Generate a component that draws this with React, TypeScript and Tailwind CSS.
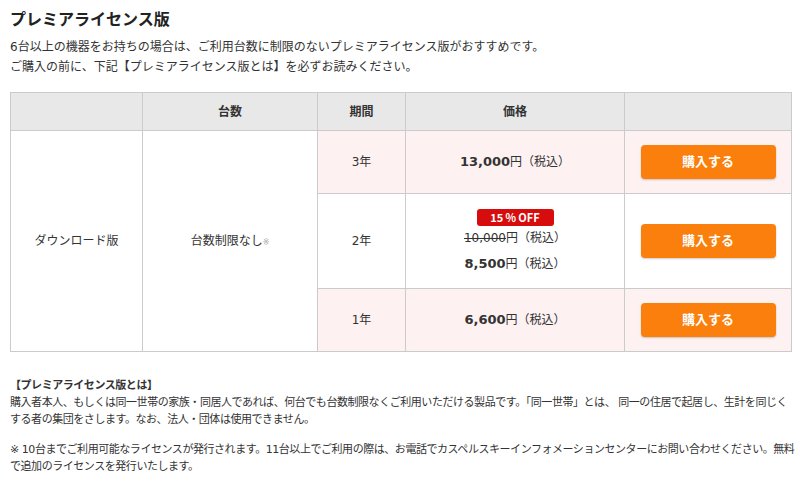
const font = "font-['DejaVu_Sans','Noto_Sans_CJK_JP',sans-serif]"

function Price({ value }: { value: string }) {
  return (
    <span className="text-[12px]">
      <span className="text-[13px] font-bold">{value}</span>円（税込）
    </span>
  )
}

function BuyButton() {
  return (
    <button className="w-[135px] h-[34px] rounded-[4px] bg-[#fa7f0c] text-white text-[13px] font-bold shadow-[0_1px_2px_rgba(0,0,0,0.2)]">
      購入する
    </button>
  )
}

export default function App() {
  const td = 'border border-[#cbcbcb] text-center align-middle'
  return (
    <div className={`${font} bg-white text-[#333] px-[10px] pt-[7px] w-[800px]`}>
      <h2 className="text-[16px] font-bold leading-[22px] text-[#222] font-['Noto_Sans_CJK_JP',sans-serif]">プレミアライセンス版</h2>
      <p className="mt-[8px] text-[12px] leading-[20px]">
        6台以上の機器をお持ちの場合は、ご利用台数に制限のないプレミアライセンス版がおすすめです。
        <br />
        ご購入の前に、下記【プレミアライセンス版とは】を必ずお読みください。
      </p>

      <table className="mt-[15px] w-[781px] border-collapse table-fixed text-[12px]">
        <colgroup>
          <col className="w-[132px]" />
          <col className="w-[175px]" />
          <col className="w-[88px]" />
          <col className="w-[219px]" />
          <col className="w-[167px]" />
        </colgroup>
        <thead>
          <tr className="h-[38px] bg-[#e8e8e8] font-bold">
            <th className={td}></th>
            <th className={td}>台数</th>
            <th className={td}>期間</th>
            <th className={td}>価格</th>
            <th className={td}></th>
          </tr>
        </thead>
        <tbody>
          <tr className="h-[63px]">
            <td rowSpan={3} className={`${td} bg-white`}>ダウンロード版</td>
            <td rowSpan={3} className={`${td} bg-white`}>
              台数制限なし<span className="text-[8px] text-[#aaa]">※</span>
            </td>
            <td className={`${td} bg-[#fdf1f1]`}>3年</td>
            <td className={`${td} bg-[#fdf1f1]`}>
              <Price value="13,000" />
            </td>
            <td className={`${td} bg-[#fdf1f1]`}>
              <BuyButton />
            </td>
          </tr>
          <tr className="h-[95px]">
            <td className={`${td} bg-white`}>2年</td>
            <td className={`${td} bg-white`}>
              <div className="flex flex-col items-center">
                <span className="w-[77px] h-[17px] rounded-[3px] bg-[#d70c0c] text-white text-[11px] font-bold leading-[17px] font-['Noto_Sans_CJK_JP',sans-serif]">
                  15<span className="px-[2px]">％</span>OFF
                </span>
                <span className="mt-[2px] leading-[20px]">
                  <span className="line-through">10,000</span>円（税込）
                </span>
                <span className="mt-[6px] leading-[20px]">
                  <Price value="8,500" />
                </span>
              </div>
            </td>
            <td className={`${td} bg-white`}>
              <BuyButton />
            </td>
          </tr>
          <tr className="h-[63px]">
            <td className={`${td} bg-[#fdf1f1]`}>1年</td>
            <td className={`${td} bg-[#fdf1f1]`}>
              <Price value="6,600" />
            </td>
            <td className={`${td} bg-[#fdf1f1]`}>
              <BuyButton />
            </td>
          </tr>
        </tbody>
      </table>

      <div className="mt-[25px] text-[11px] leading-[17px] tracking-[-0.45px] whitespace-nowrap">
        <p className="font-bold">【プレミアライセンス版とは】</p>
        <p>
          購入者本人、もしくは同一世帯の家族・同居人であれば、何台でも台数制限なくご利用いただける製品です。「同一世帯」とは、 同一の住居で起居し、生計を同じく
          <br />
          する者の集団をさします。なお、法人・団体は使用できません。
        </p>
        <p className="mt-[13px]">
          ※ 10台までご利用可能なライセンスが発行されます。11台以上でご利用の際は、お電話でカスペルスキーインフォメーションセンターにお問い合わせください。無料
          <br />
          で追加のライセンスを発行いたします。
        </p>
      </div>
    </div>
  )
}
